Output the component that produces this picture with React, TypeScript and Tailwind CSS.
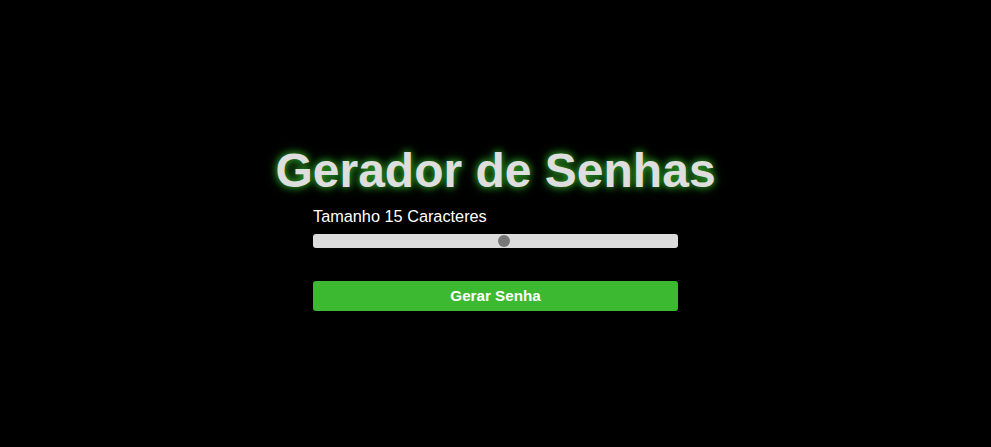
export default function App() {
  return (
    <div className="w-full h-[447px] bg-black flex flex-col items-center justify-center pt-[3px]" style={{ fontFamily: '"Liberation Sans", Arial, sans-serif' }}>
      <h1 className="text-[48px] leading-[56px] font-bold text-[#dedede] [text-shadow:0_0_7px_#2fa226,0_0_12px_#1f6e19] mt-[4px]">
        Gerador de Senhas
      </h1>
      <div className="w-[365px] flex flex-col mt-[7px]">
        <span className="text-white text-[16.3px] leading-[20px]">Tamanho 15 Caracteres</span>
        <div className="relative mt-[8px] h-[14px] rounded-[3px] bg-[#dcdcdc]">
          <div className="absolute top-[1px] left-[185px] w-[12px] h-[12px] rounded-full bg-[#777777]" />
        </div>
        <button className="mt-[33px] h-[30px] w-full rounded-[3px] bg-[#3cb930] text-white font-bold text-[15.2px]">
          Gerar Senha
        </button>
      </div>
    </div>
  );
}
